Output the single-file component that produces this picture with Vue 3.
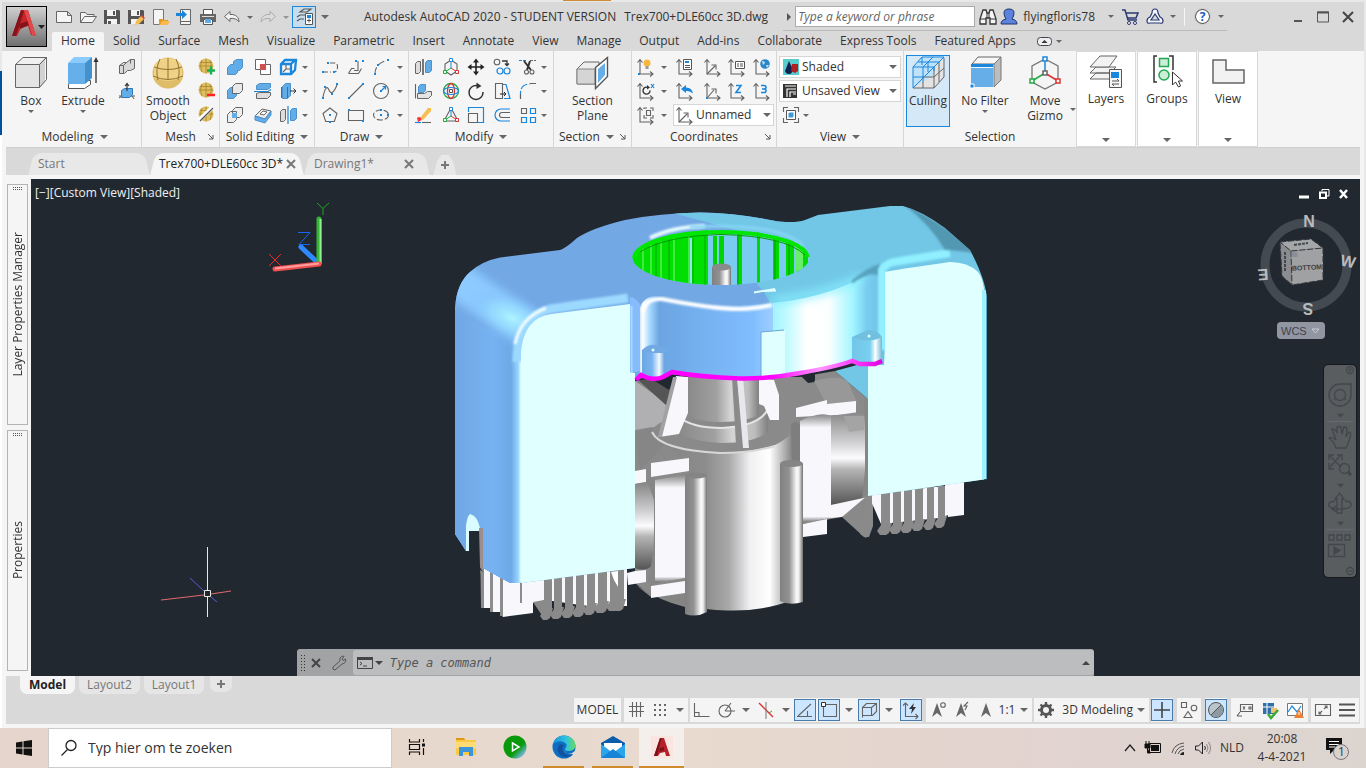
<script setup>
import { ref } from "vue";

const search = ref("");
const command = ref("");
const taskSearch = ref("");

const G = 'fill="none" stroke="#636363" stroke-width="1.1"';
const B = 'fill="none" stroke="#1a86dc" stroke-width="1.2"';
const AXES = `<path d="M4 3v14h13M1.500 5.500 4 2.500l2.500 3M14 14.500l3 2.500-3 2.500" ${G}/>`;
const BALL = `<circle cx="9" cy="9" r="7.500" fill="#e0be62"/><path d="M2 9h14M3 5.500h12M9 1.500v15M5 3q-3 6 0 12M13 3q3 6 0 12" fill="none" stroke="#a5862f" stroke-width=".8"/>`;
const dot = (x, y) => `<path d="M${x - 1} ${y - 1}h2v2h-2z" fill="#1a86dc"/>`;

// small 20x20 glyphs
const icons = {
  // quick access bar
  newFile: `<path d="M2.500 4.500h11l4 4v7h-15zM13.500 4.500v4h4" fill="#f4f4f4" stroke="#666" />`,
  open: `<path d="M2.500 15.500v-10h5l1.500 2h7v2M2.500 15.500l4-6h12l-4 6z" fill="#f4f4f4" stroke="#666"/>`,
  save: `<path d="M2 3h15l1 1v13H2z" fill="#555"/><path d="M5 3h9v6H5zM5 12h10v5H5z" fill="#f3f3f3"/><path d="M11 4h2v4h-2zM6 14h3v3H6z" fill="#555"/>`,
  saveAs: `<path d="M2 3h15l1 1v13H2z" fill="#555"/><path d="M5 3h9v6H5zM5 12h7v5H5z" fill="#f3f3f3"/><path d="M11 4h2v4h-2z" fill="#555"/><path d="m9 18 1-4 5-5 3 3-5 5z" fill="#f6bd4f"/><path d="m15 9 1-1 3 3-1 1z" fill="#e8403a"/>`,
  webOpen: `<path d="M3.500 2.500h10v15h-10z" fill="#f4f4f4" stroke="#777"/><path d="M9 12h4l1 1h4v5H9z" fill="#e39a22"/><path d="m10 18 2-4h8l-2 4z" fill="#f7bb50"/>`,
  webSave: `<path d="M6.500 2.500h10v15h-10z" fill="#f4f4f4" stroke="#666"/><path d="M7 14.500h9" stroke="#666"/><path d="M2 6h6V3l5 4.500L8 12V9H2z" fill="#1a86dc"/>`,
  print: `<path d="M5.500 2.500h9v5h-9z" fill="#fff" stroke="#555"/><path d="M2 7h16v8H2z" fill="#666"/><path d="M4 9h12v1H4z" fill="#ddd"/><path d="M5.500 12.500h9v5h-9z" fill="#fff" stroke="#555"/><path d="M7 12h6v4H7z" fill="#62ace8"/>`,
  undo: `<path d="M2.500 9.500 8 4.500v3c6-.5 9 3 9 7.500-2-3-5-4-9-3.500v3z" fill="#f2f2f2" stroke="#666"/>`,
  redo: `<path d="M17.500 9.500 12 4.500v3c-6-.5-9 3-9 7.500 2-3 5-4 9-3.500v3z" fill="#ddd" stroke="#aaa"/>`,
  sheet: `<path d="m6 5 4-3h7l-4 3zM3 10l3-2h7M3 14l3-2h4" fill="none" stroke="#555" stroke-width="1.200"/><path d="M11.500 6.500h7v11h-7z" fill="#fff" stroke="#555"/><path d="M13 8h4v3h-4z" fill="#1a86dc"/><path d="M13 13.500h4M15 11.500v4" stroke="#555"/>`,
  // modeling
  polysolid: `<path d="m2.500 8.500 4-3 3 0 4-3h4v9l-4 2h-3l-3 3h-5z" fill="#d8d8d8" stroke="#666"/><path d="M2.500 8.500h4l3-3M6.500 8.500v8M13.500 2.500v4" fill="none" stroke="#666"/>`,
  presspull: `<path d="m2 17 3-2M17 18l-2-3M2 15h16" stroke="#555"/><path d="m4.500 9.500 3-2h8v6l-3 3h-8z" fill="#62ace8" stroke="#2d78b8"/><path d="M10 10V3M8 5l2-2.500L12 5" fill="none" stroke="#333" stroke-width="1.200"/>`,
  // mesh
  ballPlus: `${BALL}<path d="M10 13.500h8M14 9.500v8" stroke="#18b050" stroke-width="2.500"/>`,
  ballMinus: `${BALL}<path d="M10 14h8" stroke="#f22" stroke-width="2.500"/>`,
  ballCrease: `${BALL}<path d="M2 15 16 2" stroke="#fff" stroke-width="4"/><path d="M3 16 16 3" stroke="#555" stroke-width="1.300"/>`,
  // solid editing
  union: `<path d="m2.500 10.500 3-3h3v-3l3-2h6v8l-3 3h-2v2l-2 2h-8z" fill="#62ace8" stroke="#4b92cc"/>`,
  subtract: `<path d="m2.500 9.500 3-3h6v8l-3 3h-6z" fill="#62ace8" stroke="#4b92cc"/><path d="m7.500 5.500 3-3h7v7l-3 3h-7z" fill="#e8e8e8" stroke="#666"/>`,
  intersect: `<path d="m2.500 9.500 3-3h6v8l-3 3h-6zM7.500 5.500l3-3h7v7l-3 3h-7z" fill="#eee" stroke="#666"/><path d="M7 8h5v5H7z" fill="#62ace8"/>`,
  interfere: `<path d="M2.500 2.500h10v10h-10zM7.500 7.500h10v10h-10z" fill="#fff" stroke="#666"/><path d="M7 7h6v6H7z" fill="#d05050"/>`,
  slice: `<path d="m3.500 4.500 3-2h11v4l-3 2h-11z" fill="#62ace8" stroke="#4b92cc"/><path d="m3.500 12.500 3-1h11v3l-3 3h-11z" fill="#ddd" stroke="#666"/><path d="m1 10.500 14 0 3-2" ${B}/>`,
  thicken: `<path d="m2 11 7-7 9 2-6 8z" fill="#eee" stroke="#666"/><path d="m2 11 10 3 6-8v4l-6 8-10-3z" fill="#62ace8" stroke="#4b92cc"/><path d="m7 9 3-3 4 1-3 3z" fill="#fff" stroke="#666"/>`,
  edges: `<path d="m3 7 4-4h11l-1 10-4 4H3zM3 7h10v10M13 7l4-4" fill="none" stroke="#1a86dc" stroke-width="2.300"/><path d="M8 8v4l-3 3M8 12h4" ${G}/>`,
  taper: `<path d="m4.500 5.500 3-3h5v12l-3 3h-5z" fill="#62ace8" stroke="#4b92cc"/><path d="M3.500 6v11M9.500 6v11" stroke="#666"/><path d="M12 10h6M15.500 7.500 18 10l-2.500 2.500" fill="none" stroke="#333"/>`,
  separate: `<path d="m2.500 6.500 2-2h3v10l-2 2h-3z" fill="#ddd" stroke="#666"/><path d="m12.500 5.500 2-2h4v10l-2 2h-4z" fill="#62ace8" stroke="#4b92cc"/><path d="M10 1v18" ${B}/>`,
  // draw
  pline: `<path d="M3 15h8M10 6h4q4 0 3.500 4.500T14 15" ${G} stroke-dasharray="5 2"/>${dot(3, 15)}${dot(8, 6)}${dot(14, 15)}`,
  planar: `<path d="m2.500 16.500 3-5h3M2.500 16.500h10l3-5M8 13.500h4V4" ${G}/>${dot(10, 4)}${dot(17, 4)}`,
  arc: `<path d="M4 17q0-11 13-14" ${G} stroke-dasharray="7 3"/>${dot(4, 17)}${dot(7, 8)}${dot(17, 3)}`,
  spline: `<path d="M3 16q3-14 6-7t8-5" ${G}/>${dot(3, 17)}${dot(5, 6)}${dot(12, 13)}${dot(17, 3)}`,
  line: `<path d="M3 17 17 3" ${G}/>${dot(3, 17)}${dot(17, 3)}`,
  circle: `<circle cx="10" cy="10" r="7.500" ${G}/>${dot(10, 10)}<path d="m10 10 4-4M11.500 5.500h3v3" ${B}/>`,
  polygon: `<path d="m10 3 7 5.500-2.700 8H5.700L3 8.500z" ${G}/>${dot(10, 10)}${dot(10, 17)}`,
  rect: `<path d="M2.500 5.500h15v10h-15z" ${G}/>${dot(3, 5)}${dot(17, 16)}`,
  ellipse: `<ellipse cx="10" cy="10" rx="7.500" ry="5" ${G} stroke-dasharray="6 2"/>${dot(10, 10)}${dot(17, 10)}${dot(10, 5)}`,
  // modify
  mirror3d: `<path d="m2.500 6.500 2-2h3v10l-2 2h-3z" fill="#ddd" stroke="#666"/><path d="m12.500 5.500 2-2h4v10l-2 2h-4z" fill="#62ace8" stroke="#4b92cc"/><path d="M10 2v16" stroke="#333" stroke-width="1.300"/>`,
  gizmoMove: `<path d="m10 3 6 4v7l-6 4-6-4V7z" ${G}/><path d="M10 3v8" stroke="#1a86dc"/><path d="m10 11-6 4" stroke="#2a4"/><path d="m10 11 6 4" stroke="#d33"/><path d="M8.500 1.500h3v3h-3z" fill="#fff" stroke="#1a86dc"/><path d="M2.500 13.500h3v3h-3z" fill="#fff" stroke="#2a4"/><path d="M14.500 13.500h3v3h-3z" fill="#fff" stroke="#d33"/>`,
  move: `<path d="M10 3v14M3 10h14" stroke="#222" stroke-width="1.600"/><path d="m7 5.500 3-4 3 4zM7 14.500l3 4 3-4zM5.500 7l-4 3 4 3zM14.500 7l4 3-4 3z" fill="#222"/>`,
  copy: `<circle cx="5" cy="5" r="2.800" ${G}/><path d="M10 4h5v4M13 6.500l2 2 2-2" fill="none" stroke="#333" stroke-width="1.300"/><circle cx="8" cy="14" r="3" ${B}/><circle cx="15" cy="14" r="3" ${B}/>`,
  trim: `<path d="M1 3.500h7" ${B} stroke-dasharray="3 1"/><path d="M12 3.500h6" ${G} stroke-dasharray="3 1"/><path d="m6 4 7 9M12 4 9 13" stroke="#333" stroke-width="2"/><circle cx="8.500" cy="15" r="2" ${G}/><circle cx="14" cy="15" r="2" ${G}/>`,
  align3d: `<path d="M2.500 3v14.500" ${G}/><path d="M4.500 12.500h7l3-2h4v4l-3 3h-11z" fill="#e4e4e4" stroke="#666"/><path d="m5.500 5.500 2-2h5v6l-2 2h-5z" fill="#62ace8" stroke="#4b92cc"/>`,
  gizmoRotate: `<circle cx="10" cy="10" r="7.500" fill="none" stroke="#2a4" stroke-width="1.300"/><ellipse cx="10" cy="10" rx="3.500" ry="7.500" fill="none" stroke="#d33" stroke-width="1.300"/><ellipse cx="10" cy="10" rx="7.500" ry="3.500" ${B}/><path d="M8.500 8.500h3v3h-3z" fill="#fff" stroke="#555"/>`,
  rotate: `<path d="M11 4.500A7 7 0 1 0 17 11" fill="none" stroke="#333" stroke-width="1.500"/><path d="m10.500 1.500 5 3.500-5 3z" fill="#333"/>`,
  stretch: `<path d="M3.500 2.500h7v15h-7z" ${G}/><path d="M11 3.500h3l4 14h-6" ${B}/><path d="M8 13h6M12 11l2 2-2 2" fill="none" stroke="#222"/>`,
  fillet: `<path d="M2.500 18V12Q3 3 12 3" ${B} stroke-dasharray="8 2"/><path d="M12 2.500h6M2.500 13v5" ${G}/>`,
  erase: `<path d="m7 13 8-10 3 0v3l-8 9z" fill="#f6bd4f"/><path d="M4 13q2-2 4 0t-3 4z" fill="#f33"/><path d="M2 17.500h6" ${B}/><path d="M9 17.500h9" ${G}/>`,
  gizmoScale: `<path d="M10 3 3 16h14z" ${G}/><path d="M10 3v8" stroke="#1a86dc"/><path d="m10 11-6 4" stroke="#2a4"/><path d="m10 11 6 4" stroke="#d33"/><path d="M8.500 2.500h3v3h-3z" fill="#fff" stroke="#1a86dc"/><path d="M2.500 13.500h3v3h-3z" fill="#fff" stroke="#2a4"/><path d="M14.500 13.500h3v3h-3z" fill="#fff" stroke="#d33"/>`,
  scale: `<path d="M2.500 7V2.500h15v15H12" ${B}/><path d="M2.500 8.500h9v9h-9z" ${G}/>`,
  offset: `<path d="M18 4H9a6 6 0 0 0 0 12h9" ${B}/><path d="M18 7.500h-8a2.500 2.500 0 0 0 0 5h8" ${G}/>`,
  array: `<path d="M3.500 3.500h5v5h-5z" ${G}/><path d="M12.500 3.500h5v5h-5zM3.500 12.500h5v5h-5zM12.500 12.500h5v5h-5z" ${B}/>`,
  // coordinates
  ucsIcon: `${AXES}<circle cx="11" cy="6" r="3.500" fill="#f6b73c"/><path d="M9.500 9h3v3h-3z" fill="#999"/>${dot(3, 17)}`,
  ucsX: `${AXES}<path d="M12 6.500a3.500 3.500 0 1 0 2 3" fill="none" stroke="#333" stroke-width="1.400"/><path d="m11 4 3 2.500-3 2z" fill="#333"/><path d="m15 3 3 4m0-4-3 4" ${B}/>`,
  ucsView: `${AXES}<path d="M8 4V3h3M14 3h3v3M8 10v3h3M17 10v3h-3M10.500 5.500h4v5h-4z" ${G}/>`,
  ucsNamed: `${AXES}<path d="M8.500 2.500h8v10h-8z" fill="#fff" stroke="#555"/><path d="M10 4h4v2h-4z" fill="#1a86dc"/><path d="M10 8.500h5M10 10.500h5" stroke="#555"/>`,
  ucsFree: `${AXES}<path d="m4 17 8-8M8.500 8H13v4.500" ${G}/>`,
  ucsManage: `${AXES}<path d="M8.500 4.500h9v7h-9z" fill="#fff" stroke="#555"/><path d="M10 7h2M10 9h2M13 7h3M13 9h3" stroke="#555"/>`,
  ucsWorld: `${AXES}<circle cx="13" cy="7" r="4.800" fill="#2b87c8"/><path d="M10 4q3 0 3 2l-2 2zM14 8l3 0-2 3z" fill="#bde0f5"/>`,
  ucsPrev: `${AXES}<path d="m6 8 5-4v2.500q6 0 7 6-3-3-7-2.500V12z" fill="#1a86dc"/>`,
  ucsOrigin: `${AXES}<path d="m4 17 7-8M8.500 8H13v4.500" ${G}/>${dot(4, 17)}`,
  ucsZ: `${AXES}<path d="M9 4.500h5l-5 7h5" fill="none" stroke="#1a86dc" stroke-width="1.600"/>`,
  ucs3: `${AXES}<path d="M9 4.500h3q2 0 2 1.700T12 8h-2 2q2 0 2 1.800t-2 1.700H9" fill="none" stroke="#1a86dc" stroke-width="1.600"/>`,
  // view panel
  shaded: `<path d="M2 2h16v16H2z" fill="#58cccc"/><path d="m8 4 4 9q-1 4-4 4t-4-3z" fill="#112050"/><path d="M11 7h6v7l-3 2-4-2z" fill="#b02020"/>`,
  unsaved: `<path d="M2 3h14v14H2z" fill="#333"/><path d="M4 5h11M6 16V8h9M9 16v-5h6M12 13h3" fill="none" stroke="#fff" stroke-width="1.200"/>`,
  viewports: `<path d="M2.500 7V2.500H7M13 2.500h4.500V7M17.500 13v4.500H13M7 17.500H2.500V13" ${G}/><path d="M5.500 5.500h9v9h-9z" fill="#fff" stroke="#555"/><path d="m7.500 8.500 1-1h4v4l-1 1h-4z" fill="#3f99d8"/>`,
  // status bar
  grid: `<path d="M3 6.500h15M3 11.500h15M6.500 2v15M10.500 2v15M14.500 2v15" ${G}/>`,
  snap: `<path d="M4 5h13M4 10h13M4 15h13" stroke="#666" stroke-width="2" stroke-dasharray="2 3"/>`,
  ortho: `<path d="M2.500 3v13.500h15M3 12.500h4v4" ${G}/>`,
  polar: `<circle cx="9" cy="11" r="6" ${G}/><path d="m9 11 6-8M9 11h10" ${G}/>`,
  iso: `<path d="M3 3l14 14" stroke="#d33" stroke-width="1.400"/><path d="M10 2v17" stroke="#777"/><path d="m13 13 3-2" stroke="#2a4"/>`,
  otrack: `<path d="M2 16.500h15M3 16 16 4M12.500 11v5" ${G}/>`,
  osnap: `<path d="M6 4.500h11.500v12H4.500V7" ${G}/><path d="M2.500 2.500h4v4h-4z" fill="#fff" stroke="#333"/>`,
  osnap3d: `<path d="m3.500 7.500 4-4h10v8l-4 4h-10zM3.500 7.500h9M12.500 7.500v8M12.500 7.500l5-4M3.500 15.500v2" ${G}/>`,
  dynUcs: `<path d="M4.500 3v13.500H17M2 5.500 4.500 3 7 5.500M14.500 14l2.500 2.500-2.500 2.500" ${G}/><path d="m13 3-5 6h3l-1 5 5-7h-3z" fill="#333"/>`,
  anno1: `<path d="m9 3 5 14-5-4-5 4z" fill="#666"/><circle cx="15" cy="5" r="2.300" ${G}/>`,
  anno2: `<path d="m9 3 5 14-5-4-5 4z" fill="#666"/><path d="m16 2-4 4h3l-2 4" ${G}/>`,
  anno3: `<path d="m10 3 5 14-5-4-5 4z" fill="#666"/>`,
  gear: `<circle cx="10" cy="10" r="4.500" fill="none" stroke="#555" stroke-width="3"/><path d="M10 2v3M10 15v3M2 10h3M15 10h3M4.500 4.500l2 2M13.500 13.500l2 2M4.500 15.500l2-2M13.500 6.500l2-2" stroke="#555" stroke-width="2.400"/>`,
  plus: `<path d="M10 2v16M2 10h16" stroke="#444" stroke-width="1.600"/>`,
  shapes: `<path d="M2.500 2.500h5v5h-5zM9 11.500l-4 6h8z" ${G} /><circle cx="15" cy="8" r="2.800" ${G}/>`,
  isolate: `<circle cx="10" cy="10" r="7.500" fill="#b9c4cc" stroke="#555"/><path d="M5 15 15 5a7 7 0 0 1-10 10z" fill="#8e9aa3"/><path d="m5 15 10-10" stroke="#555"/>`,
  units: `<path d="M5.500 4.500h12v7h-12zM5 12l-3 4M2 16h5" ${G}/><path d="m8 6.500 2 3m0-3-2 3M14 7h2v2h-2z" ${G}/>`,
  hardware: `<path d="M3 3h11v11H3z" fill="#2f6fa8"/><path d="M7 3v11M3 7h11" stroke="#fff"/><path d="M11 8h6v5h-6z" fill="#f2c46a"/><path d="m8 14 3 4 7-8" fill="none" stroke="#3aaa35" stroke-width="2.500"/>`,
  monitor: `<path d="M2.500 3.500h15v12h-15z" fill="#fff" stroke="#777"/><path d="m3 12 4-6 5 6 4-6" ${B}/><path d="m14 9 5 9H9z" fill="#f08030"/><path d="M14 12v3" stroke="#fff"/>`,
  clean: `<path d="M2.500 4.500h15v11h-15z" ${G}/><path d="m11 9 3-3M11.500 6H14v2.500M9 11l-3 3M8.500 14H6v-2.500" ${G}/>`,
  menu: `<path d="M2 4.500h16M2 10h16M2 15.500h16" stroke="#555" stroke-width="1.800"/>`,
};

// large 36x36 glyphs
const bigIcons = {
  box: `<path d="M3 9 10 2h22v25l-6 6H3z" fill="#f0f0f0"/><path d="M26 9l6-7v25l-6 6z" fill="#d2d2d2"/><path d="M3 9h23v24H3z" fill="#e4e4e4"/><path d="M2.500 9.500 10 2.500h23.500v22l-7 8h-24zM26.500 9.500l7-7M2.500 9.500h24v23" fill="none" stroke="#666"/>`,
  extrude: `<path d="m3.500 29.500 5-4h17v4l-6 4h-16z" fill="#fff" stroke="#555"/><path d="M3 8h17v21H3z" fill="#65b0ea"/><path d="m3 8 6-6h18l-7 6z" fill="#8accff"/><path d="m20 8 7-6v21l-7 6z" fill="#4291cd"/><path d="M31 28V5" stroke="#333" stroke-width="1.300"/><path d="M28.500 7 31 2l2.500 5z" fill="#333"/>`,
  sphere: `<circle cx="18" cy="18" r="15.500" fill="#dfbd68"/><path d="M4 10q14-14 28 0v13Q18 29 4 23z" fill="#f0d287"/><path d="M3 21q15 7 30 0M4 12q14 5 28 0M18 3v21M10 4Q5 14 8 25M26 4q5 10 2 21" fill="none" stroke="#8f732e"/>`,
  section: `<path d="m2 14 7-7h15v17l-4 5H2z" fill="#eee" stroke="#666"/><path d="M2 14h18v15H2z" fill="#d5d5d5" stroke="#888"/><path d="m20.500 12.500 12-10v19l-12 12z" fill="#fff" stroke="#555" stroke-width="1.400"/><path d="m23 14 7-6v12l-7 8z" fill="#65aee8"/>`,
  culling: `<path d="M3 12 12 2h22v20L24 33H3z" fill="#e3e3e3"/><path d="M3 12 12 2h22l-11 10v9L3 33z" fill="#bfe2fb"/><path d="M24 12v21H3M34 3v19L24 33M13 22v11M13 22h11l10-9M29 7v20" fill="none" stroke="#666"/><path d="M3 33V12L12 2h22L24 12H3M13 12v11M3 22h11M13 12l10-10M8 7h21M24 12v4M3 33l21-21M18 7v10M12 2v8" fill="none" stroke="#1a86dc"/>`,
  nofilter: `<path d="m5 9 6-7h23L27 9z" fill="#f6f6f6" stroke="#666"/><path d="m27 9 7-7v23l-7 7z" fill="#bdbdbd" stroke="#777"/><path d="M4 9h22v3H4z" fill="#1a86dc"/><path d="M4 13h22v19H4z" fill="#65aee8"/><path d="M3 29h4v4H3z" fill="#1a86dc" stroke="#fff"/>`,
  gizmo: `<path d="m18 4 13 7v16l-13 7-13-7V11z" fill="none" stroke="#777" stroke-width="1.300"/><path d="M18 4v14" stroke="#1a86dc" stroke-width="1.500"/><path d="M18 18 5 26" stroke="#2a4" stroke-width="1.500"/><path d="m18 18 13 8" stroke="#d33" stroke-width="1.500"/><g fill="#fff" stroke-width="1.500"><path d="M16 2h4v4h-4z" stroke="#1a86dc"/><path d="M3 24h4v4H3z" stroke="#2a4"/><path d="M29 24h4v4h-4z" stroke="#d33"/><path d="M16 16h4v4h-4z" stroke="#666"/></g>`,
  layers: `<g fill="#f3f3f3" stroke="#666"><path d="m2 25 6-6h20l-6 6zM2 19l6-6h20l-6 6z"/><path d="M2 13 12 2h17l-8 11z"/></g><path d="M21.500 15.500h12v18h-12z" fill="#f6f6f6" stroke="#555"/><path d="M23 18h8v6h-8z" fill="#1a86dc"/><path d="M24 27h7M24 30h7M29 25l2 2M26 32l-2-2" stroke="#555"/>`,
  groups: `<path d="M8 2H5v26h3M20 2h4v14" fill="none" stroke="#333" stroke-width="1.500"/><path d="M10.500 4.500h9v8h-9z" fill="#cdeed6" stroke="#22a850" stroke-width="1.500"/><circle cx="15" cy="21" r="5" fill="#cdeed6" stroke="#22a850" stroke-width="1.500"/><path d="M23.500 18v13l3-3 3 5 2-1-2-5h4z" fill="#fff" stroke="#333"/>`,
  view: `<path d="M3 6h13v10h18v13H3z" fill="#f2f2f2" stroke="#666" stroke-width="1.500"/>`,
};

const quick = ["newFile", "open", "save", "saveAs", "webOpen", "webSave", "print", "undo"];
const tabs = ["Home", "Solid", "Surface", "Mesh", "Visualize", "Parametric", "Insert", "Annotate", "View", "Manage", "Output", "Add-ins", "Collaborate", "Express Tools", "Featured Apps"];

const solidGrid = ["union", "interfere", "edges", "v", "subtract", "slice", "taper", "v", "intersect", "thicken", "separate", "v"];
const drawGrid = ["pline", "planar", "arc", "v", "spline", "line", "circle", "v", "polygon", "rect", "ellipse", "v"];
const modifyGrid = [
  "mirror3d", "gizmoMove", "move", "copy", "trim", "v",
  "align3d", "gizmoRotate", "rotate", "stretch", "fillet", "v",
  "erase", "gizmoScale", "scale", "offset", "array", "v",
];
const coordGrid = [
  "ucsIcon", "v", "ucsNamed", "ucsFree", "ucsManage", "ucsWorld",
  "ucsX", "v", "ucsPrev", "ucsOrigin", "ucsZ", "ucs3",
  "ucsView", "v",
];
const sidePanels = [
  { name: "Layers", icon: "layers" },
  { name: "Groups", icon: "groups" },
  { name: "View", icon: "view" },
];

// cooling fins: [left, right, bottom]
const finsLeft = [[544, 551, 620], [554, 562, 619], [565, 573, 618], [576, 584, 617], [587, 595, 615], [598, 607, 613], [610, 624, 611]];
const finsRight = [[881, 890, 535], [893, 901, 534], [904, 912, 533], [915, 923, 531], [927, 934, 530], [938, 945, 528]];
const fin = ([l, r, b], top) =>
  `M${l} ${top}H${r}V${b - 12}L${r + 2} ${b - 12}L${r - 1} ${b - 2}L${r - 4} ${b}H${l - 1}L${l - 4} ${b - 4}L${l} ${b - 10}Z`;
const ribs = [[737, 742], [757, 760], [773, 779], [786, 794], [796, 800], [802, 808]];
</script>

<template>
  <div class="desktop">
    <div class="window">
      <header class="head">
        <button class="app-btn" aria-label="Application menu">
          <svg width="41" height="40" viewBox="0 0 41 40">
            <path d="M5 29 14 3h7l8 26-5-1-3-9-7 2-4 8z" fill="#c8252b" />
            <path d="m14 3 3 1-8 25-4 0zM12 17l9-3 1 4-9 4z" fill="#85141a" />
            <path d="m17 3 4 0 8 26-4-1z" fill="#e04a4a" />
            <path d="M31 18h7l-3.500 4z" fill="#222" />
          </svg>
        </button>
        <div class="head-rows">
          <div class="title-row">
            <div class="quick">
              <button v-for="q in quick" :key="q" class="ico" :aria-label="q"><svg viewBox="0 0 20 20" v-html="icons[q]"></svg></button>
              <i class="caret"></i>
              <button class="ico" aria-label="Redo"><svg viewBox="0 0 20 20" v-html="icons.redo"></svg></button>
              <i class="caret faint"></i>
              <button class="ico sheet on" aria-label="Sheet set"><svg viewBox="0 0 20 20" v-html="icons.sheet"></svg></button>
              <i class="caret wide"></i>
            </div>
            <div class="doc-title">
              <span>Autodesk AutoCAD 2020 - STUDENT VERSION</span>
              <span>Trex700+DLE60cc 3D.dwg</span>
            </div>
            <div class="info">
              <i class="caret right"></i>
              <input v-model="search" class="keyword" type="text" placeholder="Type a keyword or phrase" aria-label="Search" />
              <button class="ico" aria-label="Find">
                <svg viewBox="0 0 20 20"><path d="M5 3h3l1 3h2l1-3h3l3 9v5h-6v-6H8v6H2v-5z" fill="#f5f5f5" stroke="#333" stroke-width="1.300" /><path d="M2 12h6M12 12h6M9 6v5M11 6v5" stroke="#333" /></svg>
              </button>
              <a href="#" class="user">
                <svg width="18" height="18" viewBox="0 0 18 18"><path d="M1 16q0-4 5-5-2-3-2-6 0-4 5-4t5 4q0 3-2 6 5 1 5 5z" fill="#5b82dc" stroke="#223468" /></svg>
                flyingfloris78
              </a>
              <i class="caret user-caret"></i>
              <button class="ico" aria-label="Store">
                <svg viewBox="0 0 20 20"><path d="M2 3h3l3 10h9M6 6h12l-2 5H7.500" fill="none" stroke="#2b3870" stroke-width="1.500" /><circle cx="9" cy="16" r="1.500" fill="#fff" stroke="#2b3870" /><circle cx="15" cy="16" r="1.500" fill="#fff" stroke="#2b3870" /></svg>
              </button>
              <button class="ico" aria-label="Autodesk">
                <svg viewBox="0 0 20 20"><path d="M10 2q3 0 3 4l2 4q3 1 3 4 0 3-3 2H5q-3 1-3-2 0-3 3-4l2-4q0-4 3-4zM10 7l-4 6h8z" fill="#f1f3fa" stroke="#2b3870" stroke-width="1.200" /></svg>
              </button>
              <i class="caret"></i>
              <span class="bar"></span>
              <button class="ico help" aria-label="Help"><span>?</span></button>
              <i class="caret"></i>
            </div>
            <div class="win-btns">
              <button aria-label="Minimize"><svg width="14" height="14" viewBox="0 0 14 14"><path d="M3 11h8" stroke="#555" stroke-width="2" /></svg></button>
              <button aria-label="Maximize"><svg width="14" height="14" viewBox="0 0 14 14"><path d="M1.500 2h11v10h-11z" fill="none" stroke="#555" /><path d="M1 2.500h12" stroke="#555" stroke-width="2" /></svg></button>
              <button aria-label="Close"><svg width="14" height="14" viewBox="0 0 14 14"><path d="m2 2 10 10M12 2 2 12" stroke="#444" stroke-width="2" /></svg></button>
            </div>
          </div>
          <nav class="tabs">
            <a v-for="(t, i) in tabs" :key="t" href="#" :class="{ active: i === 0 }">{{ t }}</a>
            <button class="min-ribbon" aria-label="Minimize ribbon">
              <svg width="15" height="10" viewBox="0 0 15 10"><rect x=".5" y=".5" width="14" height="8" rx="3" fill="#eee" stroke="#445" /><path d="M4.500 6 7.500 3l3 3z" fill="#333" /></svg>
            </button>
            <i class="caret"></i>
          </nav>
        </div>
      </header>

      <section class="ribbon">
        <div class="panel modeling">
          <div class="body">
            <button class="big"><svg viewBox="0 0 36 36" v-html="bigIcons.box"></svg><span>Box</span><i class="caret"></i></button>
            <button class="big ext"><svg viewBox="0 0 36 36" v-html="bigIcons.extrude"></svg><span>Extrude</span><i class="caret"></i></button>
            <div class="stack">
              <button class="ico" aria-label="Polysolid"><svg viewBox="0 0 20 20" v-html="icons.polysolid"></svg></button>
              <button class="ico" aria-label="Presspull"><svg viewBox="0 0 20 20" v-html="icons.presspull"></svg></button>
            </div>
          </div>
          <footer>Modeling <i class="caret wide"></i></footer>
        </div>
        <div class="panel mesh">
          <div class="body">
            <button class="big"><svg viewBox="0 0 36 36" v-html="bigIcons.sphere"></svg><span>Smooth<br />Object</span></button>
            <div class="stack">
              <button v-for="b in ['ballPlus', 'ballMinus', 'ballCrease']" :key="b" class="ico" :aria-label="b"><svg viewBox="0 0 20 20" v-html="icons[b]"></svg></button>
            </div>
          </div>
          <footer>Mesh <svg class="launch" width="6" height="6" viewBox="0 0 6 6"><path d="m0 0 5 5M5 1v4H1" fill="none" stroke="#555" /></svg></footer>
        </div>
        <div class="panel solid">
          <div class="body cells">
            <template v-for="(n, i) in solidGrid" :key="i">
              <i v-if="n === 'v'" class="caret"></i>
              <button v-else class="ico" :aria-label="n"><svg viewBox="0 0 20 20" v-html="icons[n]"></svg></button>
            </template>
          </div>
          <footer>Solid Editing <i class="caret wide"></i></footer>
        </div>
        <div class="panel draw">
          <div class="body cells">
            <template v-for="(n, i) in drawGrid" :key="i">
              <i v-if="n === 'v'" class="caret"></i>
              <button v-else class="ico" :aria-label="n"><svg viewBox="0 0 20 20" v-html="icons[n]"></svg></button>
            </template>
          </div>
          <footer>Draw <i class="caret wide"></i></footer>
        </div>
        <div class="panel modify">
          <div class="body cells">
            <template v-for="(n, i) in modifyGrid" :key="i">
              <i v-if="n === 'v'" class="caret"></i>
              <button v-else class="ico" :aria-label="n"><svg viewBox="0 0 20 20" v-html="icons[n]"></svg></button>
            </template>
          </div>
          <footer>Modify <i class="caret wide"></i></footer>
        </div>
        <div class="panel sect">
          <div class="body">
            <button class="big"><svg viewBox="0 0 36 36" v-html="bigIcons.section"></svg><span>Section<br />Plane</span></button>
          </div>
          <footer>Section <i class="caret wide"></i><svg class="launch" width="6" height="6" viewBox="0 0 6 6"><path d="m0 0 5 5M5 1v4H1" fill="none" stroke="#555" /></svg></footer>
        </div>
        <div class="panel coords">
          <div class="body cells">
            <template v-for="(n, i) in coordGrid" :key="i">
              <i v-if="n === 'v'" class="caret"></i>
              <button v-else class="ico" :aria-label="n"><svg viewBox="0 0 20 20" v-html="icons[n]"></svg></button>
            </template>
            <label class="combo ucs">
              <svg viewBox="0 0 20 20" v-html="icons.ucsFree"></svg>
              <select aria-label="Named UCS"><option>Unnamed</option></select>
              <i class="caret wide"></i>
            </label>
          </div>
          <footer>Coordinates <svg class="launch" width="6" height="6" viewBox="0 0 6 6"><path d="m0 0 5 5M5 1v4H1" fill="none" stroke="#555" /></svg></footer>
        </div>
        <div class="panel viewp">
          <div class="body view-body">
            <label class="combo">
              <svg viewBox="0 0 20 20" v-html="icons.shaded"></svg>
              <select aria-label="Visual style"><option>Shaded</option></select>
              <i class="caret wide"></i>
            </label>
            <label class="combo">
              <svg viewBox="0 0 20 20" v-html="icons.unsaved"></svg>
              <select aria-label="Named view"><option>Unsaved View</option></select>
              <i class="caret wide"></i>
            </label>
            <div class="vp-row">
              <button class="ico" aria-label="Viewports"><svg viewBox="0 0 20 20" v-html="icons.viewports"></svg></button>
              <i class="caret"></i>
            </div>
          </div>
          <footer>View <i class="caret wide"></i></footer>
        </div>
        <div class="panel selection">
          <div class="body">
            <button class="big on"><svg viewBox="0 0 36 36" v-html="bigIcons.culling"></svg><span>Culling</span></button>
            <button class="big nofilter"><svg viewBox="0 0 36 36" v-html="bigIcons.nofilter"></svg><span>No Filter</span><i class="caret"></i></button>
            <button class="big"><svg viewBox="0 0 36 36" v-html="bigIcons.gizmo"></svg><span>Move<br />Gizmo</span></button>
            <i class="caret gizmo-caret"></i>
          </div>
          <footer>Selection</footer>
        </div>
        <button v-for="p in sidePanels" :key="p.name" class="side-panel">
          <svg viewBox="0 0 36 36" v-html="bigIcons[p.icon]"></svg>
          <span>{{ p.name }}</span>
          <i class="caret wide"></i>
        </button>
      </section>

      <div class="files">
        <div class="file start"><span>Start</span></div>
        <div class="file current"><span>Trex700+DLE60cc 3D*</span><button aria-label="Close drawing"><svg width="10" height="10" viewBox="0 0 10 10"><path d="m1 1 8 8M9 1 1 9" stroke="#777" stroke-width="2" /></svg></button></div>
        <div class="file other"><span>Drawing1*</span><button aria-label="Close drawing"><svg width="10" height="10" viewBox="0 0 10 10"><path d="m1 1 8 8M9 1 1 9" stroke="#777" stroke-width="2" /></svg></button></div>
        <button class="file add" aria-label="New drawing"><svg width="10" height="10" viewBox="0 0 10 10"><path d="M5 1v8M1 5h8" stroke="#777" stroke-width="2" /></svg></button>
      </div>

      <main class="work">
        <aside class="palettes">
          <div class="palette"><i class="grip"></i><span>Layer Properties Manager</span></div>
          <div class="palette"><i class="grip"></i><span>Properties</span></div>
        </aside>

        <div class="canvas">
          <svg class="scene" viewBox="31 179 1329 497">
            <defs>
              <linearGradient id="side"><stop offset="0" stop-color="#6ea5e1" /><stop offset=".25" stop-color="#73abe9" /><stop offset=".6" stop-color="#76b2f2" /><stop offset=".86" stop-color="#6ea9e6" /><stop offset=".96" stop-color="#98d4ff" /><stop offset="1" stop-color="#e0ffff" /></linearGradient>
              <linearGradient id="wallL"><stop offset="0" stop-color="#90c3ff" /><stop offset=".05" stop-color="#fff" /><stop offset=".1" stop-color="#a7d9ff" /><stop offset=".17" stop-color="#6ba5e2" /><stop offset=".5" stop-color="#76b1f1" /><stop offset=".85" stop-color="#80bdff" /><stop offset="1" stop-color="#9ccfff" /></linearGradient>
              <linearGradient id="wallR"><stop offset="0" stop-color="#a2f4ff" /><stop offset=".14" stop-color="#c5fbff" /><stop offset=".3" stop-color="#fff" /><stop offset=".5" stop-color="#fdffff" /><stop offset=".72" stop-color="#a2f6ff" /><stop offset=".84" stop-color="#78cff2" /><stop offset="1" stop-color="#6fbfe0" /></linearGradient>
              <linearGradient id="body"><stop offset="0" stop-color="#848484" /><stop offset=".38" stop-color="#8c8c8c" /><stop offset=".55" stop-color="#a9a9a9" /><stop offset=".7" stop-color="#f0f0f2" /><stop offset=".84" stop-color="#fff" /><stop offset=".92" stop-color="#c4c4c4" /><stop offset="1" stop-color="#858585" /></linearGradient>
              <linearGradient id="post"><stop offset="0" stop-color="#808080" /><stop offset=".4" stop-color="#929292" /><stop offset=".72" stop-color="#fafafa" /><stop offset=".82" stop-color="#eee" /><stop offset="1" stop-color="#707070" /></linearGradient>
              <linearGradient id="tube" x2="0" y2="1"><stop offset="0" stop-color="#858585" /><stop offset=".3" stop-color="#c8c8ca" /><stop offset=".5" stop-color="#fcfcff" /><stop offset=".62" stop-color="#b5b5b5" /><stop offset="1" stop-color="#555" /></linearGradient>
              <linearGradient id="plate" x2="0" y2="1"><stop offset="0" stop-color="#888" /><stop offset=".12" stop-color="#f8f8fc" /><stop offset=".94" stop-color="#f8f8fc" /><stop offset="1" stop-color="#666" /></linearGradient>
              <linearGradient id="shaft"><stop offset="0" stop-color="#8a8a8a" /><stop offset=".4" stop-color="#a0a0a0" /><stop offset=".6" stop-color="#d4d4d4" /><stop offset=".85" stop-color="#bcbcbc" /><stop offset="1" stop-color="#808080" /></linearGradient>
              <linearGradient id="lug"><stop offset="0" stop-color="#6ca6e2" /><stop offset=".45" stop-color="#78b2f0" /><stop offset=".78" stop-color="#f2faff" /><stop offset="1" stop-color="#72a9e2" /></linearGradient>
              <linearGradient id="lug2"><stop offset="0" stop-color="#72c6e8" /><stop offset=".6" stop-color="#78cfef" /><stop offset=".78" stop-color="#fff" /><stop offset="1" stop-color="#70b8d6" /></linearGradient>
              <linearGradient id="seal"><stop offset="0" stop-color="#f0f" /><stop offset=".55" stop-color="#f0f" /><stop offset=".75" stop-color="#ff96ff" /><stop offset=".88" stop-color="#ff40ff" /><stop offset="1" stop-color="#e000e0" /></linearGradient>
              <radialGradient id="corner"><stop offset="0" stop-color="#aef4ff" /><stop offset=".5" stop-color="#96dcff" stop-opacity=".7" /><stop offset="1" stop-color="#78b4f4" stop-opacity="0" /></radialGradient>
              <filter id="soft" x="-30%" y="-30%" width="160%" height="160%"><feGaussianBlur stdDeviation="5" /></filter>
              <filter id="fine" x="-20%" y="-20%" width="140%" height="140%"><feGaussianBlur stdDeviation="1" /></filter>
              <clipPath id="cowl"><path d="M455 307Q457 283 470 272 482 261 500 257.500L560 250Q566 248 577 238 592 228 625 220 660 213 700 212.500 735 213 770 220 793 224 805 220L818 215 890 206H903Q922 211 945 228L970 250Q986 280 987 300V479L868 496V365L852 362Q800 378 740 380 700 378 672 374L635 379V568L522 583H510L483 568 480 530Q475 514 471 514 467 516 466 551L455 534Z" /></clipPath>
              <clipPath id="hole"><ellipse cx="721" cy="257.500" rx="88.500" ry="27.500" /></clipPath>
            </defs>

            <!-- engine -->
            <path d="M635 381 690 377H800L835 371 868 399V500L842 517 803 524 760 600 650 595 635 583Z" fill="#8a8a8a" />
            <path d="M635 381 668 404 660 436 635 430Z" fill="#b0b0b2" />
            <path d="M638 380 674 377 667 406Z" fill="#555" />
            <path d="M650 378 675 377 669 390Z" fill="#222830" />
            <path d="M801 376 815 373V382L808 383Z" fill="#222830" />
            <path d="M814 381Q840 374 848 382L857 402 827 405Z" fill="#989898" />
            <!-- left exhaust -->
            <path d="M635 430 652 427V475H635Z" fill="#8a8a8a" />
            <path d="M635 471 646 469V482L635 484Z" fill="#f8f8fc" />
            <path d="M635 484Q652 480 653 485 656 525 652 566 645 572 635 568Z" fill="url(#tube)" />
            <path d="M647 480 655 475V596L648 580 654 550V500Z" fill="#868686" />
            <path d="M635 571 646 570V582L628 585 627 573Z" fill="#f8f8fc" />
            <path d="M636 585 651 597 685 593V607Q660 601 636 585Z" fill="#858585" />
            <!-- right exhaust -->
            <path d="M796 408 827 400V404L856 401V414L796 417Z" fill="#f8f8fc" />
            <path d="M831 416 866 411V500L831 505Z" fill="url(#tube)" />
            <path d="M844 416H864V430L849 432Z" fill="#a4a4a4" />
            <path d="M864 400 868 398V500L862 500 865 470V420Z" fill="#868686" />
            <path d="M800 421Q820 411 831 416V518L800 523Z" fill="url(#plate)" />
            <path d="M803 524 827 519V534L803 537Z" fill="#f8f8fc" />
            <path d="M831 505 868 497V514L831 518Z" fill="#f8f8fc" />
            <path d="M842 517 868 495H873V526L869 537H864Z" fill="#898989" />
            <!-- crankcase -->
            <path d="M652 432Q655 452 720 453 780 450 792 432V600Q765 611 730 610.500 705 611 688 604L684 460Z" fill="url(#body)" />
            <path d="M635 432 690 418 640 470Z" fill="#868686" />
            <path d="M652 430Q660 415 720 412 775 412 791 426 793 436 775 445 750 453 722 453 655 448 652 430Z" fill="#8a8a8a" />
            <path d="M652 432Q660 450 720 453 750 453 775 446" fill="none" stroke="#d8d8d8" stroke-width="2" />
            <path d="M651 463 689 458V471L651 477Z" fill="#f8f8fc" />
            <path d="M655 480 685 475V578L655 583Z" fill="url(#plate)" />
            <path d="M651 586 685 581V593L651 598Z" fill="#f8f8fc" />
            <path d="M679 416Q692 428 722 428 760 426 768 408V432Q755 443 722 443 690 441 679 433Z" fill="url(#shaft)" />
            <path d="M679 417Q692 428 722 428 760 426 768 409" fill="none" stroke="#e4e4e4" stroke-width="2" />
            <path d="M688 376H759V415Q745 422 722 422 700 422 688 416Z" fill="url(#shaft)" />
            <path d="M676 376 688 377V413L679 434 659 437Z" fill="#f8f8fc" />
            <path d="M673 377H677L662 437H658Z" fill="#a2a2a4" />
            <path d="M759 378 774 380 779 395V420H770L764 406 759 404Z" fill="#f8f8fc" />
            <path d="M732 377H737L744 447 736 444Z" fill="#8a8a8a" />
            <path d="M737 377H743L749 448H743Z" fill="#e8e8ec" />
            <path d="M791 425Q796 418 800 425V465H792Z" fill="#7e7e7e" />
            <path d="M685 479Q696 471 707 479V612Q696 618 685 614Z" fill="url(#post)" />
            <ellipse cx="696" cy="475.500" rx="11" ry="3" fill="#858585" />
            <path d="M780 464H803V602Q790 606 780 601Z" fill="url(#post)" />
            <ellipse cx="791.500" cy="463.500" rx="11.500" ry="3.500" fill="#858585" />

            <!-- cooling fins -->
            <path d="M481 545 521 582 627 568V606H610L600 608 546 600 533 603V613L503 617 500 612H491V608H483L480 560Z" fill="#f8f8fc" />
            <path d="M480 540 484 545V608H481ZM490 572H493V612H490ZM500 578H503V616H500ZM520 580H522V603H520Z" fill="#8c8c8c" />
            <path d="M533 602 544 600V578L552 575V612L545 620Z" fill="#8a8a8a" />
            <path v-for="f in finsLeft" :key="f[0]" :d="fin(f, 570)" fill="#8a8a8a" />
            <path d="M611 572 618 571V587L614 580Z" fill="#fff" />
            <path d="M868 494 964 484V515H948L940 518 881 524Z" fill="#f8f8fc" />
            <path v-for="f in finsRight" :key="f[0]" :d="fin(f, 486)" fill="#8a8a8a" />
            <path d="M866 494H872V528L866 538 860 534Z" fill="#8a8a8a" />
            <path d="M945 484 964 482V515L948 517Z" fill="#f8f8fc" />

            <!-- cowl -->
            <g clip-path="url(#cowl)">
              <path d="M450 200H775V385H635V590H450Z" fill="#72a8e4" />
              <path d="M673 200H1000V500H773V320Q774 302 757 284L735 230 673 213Z" fill="#72c7e7" />
              <path d="M450 310V590H521V345Z" fill="url(#side)" filter="url(#fine)" />
              <path d="M450 340V582H521V360Z" fill="url(#side)" />
              <path d="M452 276Q485 300 530 330" fill="none" stroke="#8ccaff" stroke-width="36" filter="url(#soft)" />
              <ellipse cx="512" cy="318" rx="46" ry="24" fill="url(#corner)" transform="rotate(25 512 318)" />
              <path d="M517 362Q518 318 550 309L628 298" fill="none" stroke="#9cd9ff" stroke-width="9" filter="url(#fine)" />
              <path d="M515 344Q520 318 546 308" fill="none" stroke="#f4ffff" stroke-width="3" filter="url(#fine)" />
              <path d="M521 585V352Q524 318 551 314L630 304V372L635 373V590Z" fill="#e0ffff" />
              <path d="M630 297Q634 296 641 305V371L631 373Z" fill="#86bcfc" />
              <path d="M631.500 306V373" stroke="#a4dcff" stroke-width="2" />

              <!-- duct wall -->
              <path d="M640 372V308Q644 294 660 297 720 311 773 303V382H636Z" fill="url(#wallL)" />
              <path d="M773 303Q840 296 884 264V385H773Z" fill="url(#wallR)" />
              <path d="M643 312Q645 298 662 299 712 309 740 309 760 308 772 305" fill="none" stroke="#fff" stroke-width="4" filter="url(#fine)" />
              <path d="M773 301Q830 294 862 277" fill="none" stroke="#88f0ff" stroke-width="7" filter="url(#soft)" />
              <path d="M852 280Q870 266 880 264V276Q870 270 852 284Z" fill="#4b91ab" filter="url(#fine)" opacity=".7" />
              <path d="M882 350V270Q886 262 900 261L950 253" fill="none" stroke="#90f0ff" stroke-width="8" filter="url(#fine)" />
              <path d="M885 345V272Q892 270 950 262 968 262 978 272 985 280 984 300V482L868 497V365H884Z" fill="#e0ffff" />
              <path d="M887 345V278" stroke="#fff" stroke-width="4" filter="url(#fine)" />
              <path d="M903 204Q950 226 974 253 955 250 945 250 930 224 903 204Z" fill="#3b7186" filter="url(#fine)" opacity=".55" />
              <path d="M984 290V479" stroke="#a0f0ff" stroke-width="4" />
              <path d="M986.500 285V480" stroke="#5aa9c6" />
              <path d="M761 332 785 330V385H761Z" fill="#e0ffff" />
              <path d="M761 378V332L784 330" fill="none" stroke="#68a6d8" />
              <path d="M754 292.500 775 289M765 291 776 290.500" stroke="#e0ffff" stroke-width="2" />
            </g>
            <path d="M835 371 868 362V399Z" fill="#72c7e7" />
            <path d="M466 551V525Q468 513 471 514 477 516 480 528V531H469V551Z" fill="#d8fcff" />
            <path d="M469 531H479V566L483 572 466 560V552H469Z" fill="#222830" />
            <path d="M479 528H483V570L480 566Z" fill="#9a8f8c" />

            <!-- intake and impeller -->
            <path d="M650 238Q672 227 705 226" fill="none" stroke="#e6fdff" stroke-width="4" filter="url(#fine)" />
            <path d="M690 227Q780 222 803 246" fill="none" stroke="#86d4f4" stroke-width="3" filter="url(#fine)" />
            <ellipse cx="721" cy="257.500" rx="88.500" ry="27.500" fill="#7acbf0" />
            <g clip-path="url(#hole)">
              <path d="M630 228H708V286H630Z" fill="#00e000" />
              <path d="M643 240V280M651 240V280M661 240V282M674 238V284M689 235V286" stroke="#7cf87c" />
              <path d="M656 240V280M669 240V280M693 238V286M705 236V286" stroke="#00a800" />
              <path d="M691 238V290" stroke="#92e5f0" stroke-width="2" />
              <path d="M713 236H717V266H713ZM719 236H724V264H719Z" fill="#00d400" />
              <path v-for="r in ribs" :key="r[0]" :d="`M${r[0]} 232H${r[1]}V290H${r[0]}Z`" fill="#00d800" />
              <path d="M738 236V286M775 236V284M789 240V280M798 242V276" stroke="#009c00" />
              <path d="M795 245H803V275L795 280Z" fill="#68ee68" />
              <path d="M632 258A89 27.500 0 0 1 810 257" fill="none" stroke="#00e600" stroke-width="8" />
              <path d="M640 252Q665 236 721 234.500 785 236 805 255" fill="none" stroke="#009a00" />
            </g>
            <path d="M712 267H731V285H712Z" fill="url(#post)" />
            <ellipse cx="721.500" cy="267" rx="9.500" ry="3.500" fill="#8a8a8a" />

            <!-- lugs and seal -->
            <path d="M642 350H664V375Q660 380 652 380 645 379 642 375Z" fill="url(#lug)" />
            <path d="M642 350Q648 344 656 345L670 348 664 353H650Z" fill="#72a8e4" />
            <path d="M852 337H882V360Q868 366 852 360Z" fill="url(#lug2)" />
            <path d="M852 337 868 330Q878 330 882 337 868 344 852 337Z" fill="#72c0e0" />
            <circle cx="653" cy="350" r="1.500" fill="#dff" />
            <circle cx="869" cy="336" r="1.500" fill="#dff" />
            <path d="M636 380 641 375 648 378Q657 380 663 377L672 372Q700 377 740 378.500 770 379 800 373 835 367 852 361L860 364 875 364 882 361" fill="none" stroke="url(#seal)" stroke-width="4.500" />

            <!-- UCS icon -->
            <path d="M301 247 318 263" stroke="#2f8aff" stroke-width="5" stroke-linecap="round" />
            <path d="M319 219V263" stroke="#36b536" stroke-width="5" stroke-linecap="round" />
            <path d="M320.500 219V264" stroke="#8ff08f" stroke-width="2" />
            <path d="M275 269 319 264" stroke="#f25050" stroke-width="5" stroke-linecap="round" />
            <path d="M275 268.500 319 263.500" stroke="#ffa0a0" stroke-width="2" />
            <path d="m317 203 6 5.500 6-5.500M323 208.500V215" fill="none" stroke="#1ea81e" />
            <path d="m269 254 12 12M281 254 269 266" stroke="#f02828" />
            <path d="M298 232.500H310L299 244.500H310" fill="none" stroke="#1468f0" />

            <!-- crosshair -->
            <path d="M161 600 204 595M211 594 231 591" stroke="#e06a6a" />
            <path d="M190 578 204 591M211 597 217 602" stroke="#5a5ad8" />
            <path d="M207.500 547V590M207.500 597V617M204.500 590.500H210.500V596.500H204.500Z" fill="none" stroke="#e8e8e8" />
          </svg>

          <div class="vp-label">[−][Custom View][Shaded]</div>
          <div class="vp-btns">
            <button aria-label="Minimize viewport"><svg width="12" height="12" viewBox="0 0 12 12"><path d="M1 9h10" stroke="#fff" stroke-width="3" /></svg></button>
            <button aria-label="Restore viewport"><svg width="12" height="12" viewBox="0 0 12 12"><path d="M4 3V1.500h7V8H9" fill="none" stroke="#fff" /><path d="M2 4.500h6V10H2z" fill="none" stroke="#fff" stroke-width="2" /></svg></button>
            <button aria-label="Close viewport"><svg width="12" height="12" viewBox="0 0 12 12"><path d="m2 2 7 8M9 2 2 10" stroke="#fff" stroke-width="2.500" /></svg></button>
          </div>
          <div class="cube">
            <svg width="104" height="110" viewBox="1256 209 104 110">
              <ellipse cx="1306" cy="265" rx="41" ry="42" fill="none" stroke="#434a52" stroke-width="9" />
              <path d="m1280 242 31-3 12 9-32 3z" fill="#a4a6a8" />
              <path d="m1280 242 11 9 1 34-10-9z" fill="#8a8c8f" />
              <path d="m1291 251 32-3v32l-31 5z" fill="#a0a1a3" />
              <path d="m1280 242 31-3 12 9-32 3zM1291 251l1 34M1323 248v32l-31 5-10-9-2-34" fill="none" stroke="#33383e" stroke-dasharray="6 2" />
              <path d="M1291.500 252h6v5h-6z" fill="#8b8e98" />
              <path d="m1294 245 14-2M1285 252v20" stroke="#44484e" stroke-width="2" stroke-dasharray="3 1" />
              <text x="1307" y="270" text-anchor="middle" font-size="7" font-weight="700" fill="#3a3e44" transform="rotate(-3 1307 268)">BOTTOM</text>
              <g font-size="16" font-weight="700" fill="#b9bbbd" text-anchor="middle">
                <text x="1309" y="227">N</text>
                <text x="1308" y="313" transform="rotate(180 1308 308)">S</text>
                <text x="1263" y="279" transform="rotate(176 1263 274)">E</text>
                <text x="1348" y="267" transform="rotate(12 1348 262)">W</text>
              </g>
            </svg>
            <button class="wcs">WCS <svg width="9" height="6" viewBox="0 0 9 6"><path d="M1 1h7L4.500 5z" fill="none" stroke="#c9cbd3" /></svg></button>
          </div>
          <div class="navbar">
            <svg width="32" height="212" viewBox="0 0 32 212" fill="none" stroke="#43474b" stroke-width="1.300">
              <circle cx="26" cy="5" r="3.500" /><path d="m24.500 3.500 3 3m0-3-3 3" />
              <path d="M16 19h11v11a11 11 0 1 1-11-11z" /><circle cx="16" cy="30" r="5.500" /><path d="m10 35 2-2M22 35l-2-2" />
              <path d="M14.500 49.500h4l-2 2z" fill="#43474b" />
              <path d="M3 56.500h26M3 164.500h26" stroke="#666a6d" />
              <path d="M12 83q-2-6-7-10 3-2 7 2L8 64q3-1 5 4V62q3-1 4 0l1 7 2-7q3 0 3 2l-1 8 3-5q3 1 1 5-2 8-4 11z" />
              <path d="m5 90 12 12M17 90 5 103M5 95v-5h5M13 90h5v5M5 98v6h5" /><circle cx="20.500" cy="103.500" r="5" /><path d="m24 107 3 3" stroke-width="3" />
              <path d="M14.500 119.500h4l-2 2z" fill="#43474b" />
              <path d="M13 148v-14h-2l4.500-6 4.500 6h-2v14z" /><path d="M11 136q-8 1-6 5 3 4 14 3 9-1 8-5 0-3-6-3M12 141l-4 3 4 3" />
              <path d="M14.500 157.500h4l-2 2z" fill="#43474b" />
              <path d="M5 170h5v5H5zM13 170h5v5h-5zM21 170h5v5h-5zM4.500 179.500h16v12h-16z" /><path d="m10 182 6 3.500-6 3.500z" fill="#43474b" />
              <circle cx="26" cy="206" r="3.500" /><path d="M24 206h4" />
            </svg>
          </div>
          <div class="cmd">
            <i class="cmd-grip"></i>
            <button class="cmd-x" aria-label="Close command line"><svg width="10" height="10" viewBox="0 0 10 10"><path d="m1 1 8 8M9 1 1 9" stroke="#444" stroke-width="2" /></svg></button>
            <button class="cmd-tool" aria-label="Customize"><svg width="16" height="16" viewBox="0 0 16 16"><path d="m2 12 7-6q-1-4 3-5l1 .500L11 4l1 1.500 2.500-1.500q1 4-3.500 5l-7 6q-3 0-2-3z" fill="none" stroke="#555" /></svg></button>
            <label class="cmd-line">
              <svg width="26" height="14" viewBox="0 0 26 14"><path d="M.5 1.500h15v11H.5z" fill="none" stroke="#444" /><path d="M0 2.500h16" stroke="#444" stroke-width="3" /><path d="m3 6 2 1.500L3 9M6 10h4" fill="none" stroke="#444" /><path d="M18 5h8l-4 4z" fill="#444" /></svg>
              <input v-model="command" type="text" placeholder="Type a command" aria-label="Command" />
              <i class="caret up"></i>
            </label>
          </div>
        </div>
      </main>

      <div class="layouts">
        <a href="#" class="active">Model</a>
        <a href="#">Layout2</a>
        <a href="#">Layout1</a>
        <button aria-label="New layout"><svg width="8" height="8" viewBox="0 0 8 8"><path d="M4 0v8M0 4h8" stroke="#777" stroke-width="2" /></svg></button>
      </div>

      <div class="status">
        <div class="grp"><button class="txt model">MODEL</button></div>
        <div class="grp g3">
          <button class="st" aria-label="Grid"><svg viewBox="0 0 20 20" v-html="icons.grid"></svg></button>
          <button class="st" aria-label="Snap"><svg viewBox="0 0 20 20" v-html="icons.snap"></svg></button>
          <i class="caret wide"></i>
        </div>
        <div class="grp g2">
          <button class="st" aria-label="Ortho"><svg viewBox="0 0 20 20" v-html="icons.ortho"></svg></button>
          <button class="st" aria-label="Polar"><svg viewBox="0 0 20 20" v-html="icons.polar"></svg></button>
          <i class="caret wide"></i>
          <button class="st" aria-label="Isodraft"><svg viewBox="0 0 20 20" v-html="icons.iso"></svg></button>
          <i class="caret wide"></i>
          <button class="st on" aria-label="Tracking"><svg viewBox="0 0 20 20" v-html="icons.otrack"></svg></button>
          <button class="st on gap" aria-label="Object snap"><svg viewBox="0 0 20 20" v-html="icons.osnap"></svg></button>
          <i class="caret wide mid"></i>
          <button class="st on" aria-label="3D snap"><svg viewBox="0 0 20 20" v-html="icons.osnap3d"></svg></button>
          <i class="caret wide mid"></i>
          <button class="st on gap" aria-label="Dynamic UCS"><svg viewBox="0 0 20 20" v-html="icons.dynUcs"></svg></button>
        </div>
        <div class="grp g4">
          <button class="st" aria-label="Annotation visibility"><svg viewBox="0 0 20 20" v-html="icons.anno1"></svg></button>
          <button class="st" aria-label="Auto scale"><svg viewBox="0 0 20 20" v-html="icons.anno2"></svg></button>
          <button class="st" aria-label="Annotation scale"><svg viewBox="0 0 20 20" v-html="icons.anno3"></svg></button>
          <button class="txt scale">1:1</button>
          <i class="caret wide"></i>
        </div>
        <div class="grp g2">
          <button class="st" aria-label="Workspace"><svg viewBox="0 0 20 20" v-html="icons.gear"></svg></button>
          <button class="txt ws">3D Modeling</button>
          <i class="caret wide"></i>
        </div>
        <div class="grp g2"><button class="st on" aria-label="Monitor"><svg viewBox="0 0 20 20" v-html="icons.plus"></svg></button></div>
        <div class="grp g4"><button class="st" aria-label="Isolate"><svg viewBox="0 0 20 20" v-html="icons.shapes"></svg></button></div>
        <div class="grp g4"><button class="st on" aria-label="Performance"><svg viewBox="0 0 20 20" v-html="icons.isolate"></svg></button></div>
        <div class="grp g4 trio">
          <button class="st" aria-label="Units"><svg viewBox="0 0 20 20" v-html="icons.units"></svg></button>
          <button class="st" aria-label="Hardware"><svg viewBox="0 0 20 20" v-html="icons.hardware"></svg></button>
          <button class="st" aria-label="Graphics"><svg viewBox="0 0 20 20" v-html="icons.monitor"></svg></button>
        </div>
        <div class="grp g3">
          <button class="st" aria-label="Clean screen"><svg viewBox="0 0 20 20" v-html="icons.clean"></svg></button>
          <button class="st" aria-label="Customization"><svg viewBox="0 0 20 20" v-html="icons.menu"></svg></button>
        </div>
      </div>
    </div>

    <!-- Windows taskbar -->
    <footer class="taskbar">
      <button class="win" aria-label="Start"><svg width="16" height="16" viewBox="0 0 16 16"><path d="m0 2.500 6.500-1v6H0zM7.500 1.300 16 0v7.500H7.500zM0 8.500h6.500v6L0 13.500zM7.500 8.500H16V16l-8.500-1.300z" fill="#111" /></svg></button>
      <label class="win-search">
        <svg width="18" height="18" viewBox="0 0 18 18"><circle cx="11" cy="6.500" r="5" fill="none" stroke="#222" stroke-width="1.300" /><path d="m7.500 10.500-6 6" stroke="#222" stroke-width="1.300" /></svg>
        <input v-model="taskSearch" type="text" placeholder="Typ hier om te zoeken" aria-label="Typ hier om te zoeken" />
      </label>
      <button class="task" aria-label="Task view"><svg width="18" height="18" viewBox="0 0 18 18"><path d="M1.500 1v3h10V1M1.500 17v-3h10v3M1.500 6.500h10v5h-10zM15.500 1v3M15.500 10v7" fill="none" stroke="#111" stroke-width="1.200" /><path d="M14 5.500h3v3h-3z" fill="#111" /></svg></button>
      <button class="task" aria-label="Explorer"><svg width="22" height="20" viewBox="0 0 22 20"><path d="M1 1h8l2 2h10v15H1z" fill="#fbc944" /><path d="M1 1h8l1 2H1z" fill="#dd9a10" /><path d="M1 5h20v6H1z" fill="#ffdc73" /><path d="M4 10h14v9h-4v-4H8v4H4z" fill="#3c95d8" /></svg></button>
      <button class="task" aria-label="Player"><svg width="24" height="24" viewBox="0 0 24 24"><defs><linearGradient id="play" x2="1" y2="1"><stop offset=".6" stop-color="#089a0a" /><stop offset=".85" stop-color="#75b7e0" /></linearGradient></defs><circle cx="12" cy="12" r="11.500" fill="url(#play)" /><path d="m9.500 8 6.500 4-6.500 4z" fill="none" stroke="#fff" stroke-width="1.500" /></svg></button>
      <button class="task run" aria-label="Edge"><svg width="26" height="24" viewBox="0 0 26 24"><defs><linearGradient id="edge"><stop offset="0" stop-color="#1595dc" /><stop offset=".6" stop-color="#32c3dc" /><stop offset="1" stop-color="#68dc5c" /></linearGradient></defs><circle cx="13" cy="12" r="11.500" fill="#0c6fc4" /><path d="M2 9Q5 0 14 .5 24 2 24.500 11q-1 5-7 5-5 0-3-3 3-4-2-6Q7 5 2 9z" fill="url(#edge)" /><path d="M9 9q-5 6 0 11 5 4 12 0-7 1-9-4-1-4 1-6z" fill="#1052a0" /><path d="M13 15q2 4 8 3l3-2-1 3q-8 0-10-4z" fill="#e7d8cf" /></svg></button>
      <button class="task run" aria-label="Mail"><svg width="26" height="24" viewBox="0 0 26 24"><path d="M1 8 13 1l12 7v15H1z" fill="#0b5cab" /><path d="M4 8h18v9H4z" fill="#fff" /><path d="m1 9 12 9 12-9v14H1z" fill="#2aa5ea" /><path d="m1 23 12-9 12 9z" fill="#1784d8" /></svg></button>
      <button class="task run current" aria-label="AutoCAD"><svg width="22" height="22" viewBox="0 0 22 22"><path d="M0 0h22v22H0z" fill="#fae5e0" /><path d="M3 20 9 2h4l6 18h-4l-1-4-5 1-2 3z" fill="#b5202a" /><path d="m9 2 1.500 0L6 20H3zM9 12l4-1v3l-5 2z" fill="#7d1118" /></svg></button>
      <div class="tray">
        <svg width="12" height="20" viewBox="0 0 12 20"><path d="m1 13 5-6 5 6" fill="none" stroke="#222" stroke-width="1.300" /></svg>
        <svg width="18" height="20" viewBox="0 0 18 20"><path d="M5.500 5.500h11v9h-11z" fill="none" stroke="#111" /><path d="M7 7h8v6H7z" fill="#111" /><path d="M1 6h5v4H1zM2 3v3M5 3v3M3.500 10v5h3" fill="#111" stroke="#111" /></svg>
        <svg width="16" height="20" viewBox="0 0 16 20"><g fill="none" stroke="#555"><path d="M2 15Q4 6 14 5M5 16q2-7 9-8M8 16q1-4 6-5" /></g><path d="M10 17q1-3 4-3v3z" fill="#222" /></svg>
        <svg width="18" height="20" viewBox="0 0 18 20"><path d="M1.500 8h3l4-4v12l-4-4h-3zM10.500 8q2 2 0 4" fill="none" stroke="#222" /><path d="M12.500 6q3 4 0 8M14.500 4q4 6 0 12" fill="none" stroke="#888" /></svg>
        <span class="lang">NLD</span>
        <div class="clock"><span>20:08</span><span>4-4-2021</span></div>
        <button class="note" aria-label="Notifications">
          <svg width="26" height="26" viewBox="0 0 26 26"><path d="M1 3h16v12H9l-4 4v-4H1z" fill="#111" /><path d="M4 6.500h10M4 9.500h10M4 12h6" stroke="#fff" /><circle cx="16" cy="17" r="7.500" fill="#d8d2cf" stroke="#777" /></svg>
          <b>1</b>
        </button>
      </div>
    </footer>
  </div>
</template>

<style>
body {
  margin: 0;
  background: #e6e6e6;
}
</style>

<style scoped>
.desktop {
  display: flex;
  flex-direction: column;
  min-height: 100vh;
  font-family: "Open Sans", "Noto Sans", sans-serif;
  font-size: 12px;
  line-height: 16px;
  color: #333;
  background: linear-gradient(90deg, transparent 563px, #cf8a35 563px, #cf8a35 611px, transparent 611px) top / 100% 1px no-repeat, linear-gradient(#e8e8e8 71px, #00509e 71px, #00509e 135px, #fff 135px) left / 2px 100% no-repeat, #e8e8e8;
}
button {
  border: 0;
  padding: 0;
  margin: 0;
  background: none;
  font: inherit;
  color: inherit;
}
a {
  color: inherit;
  text-decoration: none;
}
svg {
  display: block;
  flex: none;
}
input,
select {
  font: inherit;
  color: inherit;
  border: 0;
  outline: 0;
  padding: 0;
  min-width: 0;
}

.window {
  flex: 1;
  display: flex;
  flex-direction: column;
  margin: 2px 2px 0;
  padding: 0 4px 4px;
  background: #f5f5f5;
}

/* carets */
.caret {
  display: flex;
  justify-content: center;
  align-items: center;
}
.caret::after {
  content: "";
  border: 3px solid transparent;
  border-top-color: #666;
  border-bottom: 0;
}
.caret.wide::after {
  border-width: 4px 4px 0;
}
.caret.right::after {
  border: 4px solid transparent;
  border-left-color: #555;
  border-right: 0;
}
.caret.up::after {
  border: 4px solid transparent;
  border-bottom-color: #444;
  border-top: 0;
}
.caret.faint {
  opacity: 0.6;
}
.ico {
  display: flex;
  align-items: center;
  justify-content: center;
}
.ico svg,
.st svg,
.combo svg {
  width: 20px;
  height: 20px;
}

/* header */
.head {
  display: flex;
  background: #d9d9d9;
  margin: 0 -4px;
  padding-left: 4px;
}
.app-btn {
  width: 41px;
  height: 41px;
  margin-top: 4px;
  border: 1px solid #000;
  background: linear-gradient(#d0d0d0, #707070);
  overflow: hidden;
}
.head-rows {
  flex: 1;
  min-width: 0;
}
.title-row {
  height: 30px;
  display: flex;
  align-items: center;
}
.quick {
  display: flex;
  align-items: center;
  width: 312px;
  padding-left: 5px;
}
.quick .ico {
  width: 24px;
  height: 22px;
}
.quick .caret {
  width: 12px;
}
.quick .sheet {
  box-sizing: border-box;
  border: 1px solid #1a86dc;
  background: #c8ddeb;
}
.quick .caret.wide {
  width: 18px;
}
.doc-title {
  display: flex;
  gap: 8px;
  white-space: nowrap;
  flex: 1;
}
.info {
  display: flex;
  align-items: center;
  border-bottom: 1px solid #bbb;
  height: 26px;
}
.info .caret {
  width: 12px;
}
.info .caret.user-caret {
  width: 19px;
  padding-right: 3px;
  justify-content: flex-end;
}
.keyword {
  width: 174px;
  height: 19px;
  border: 1px solid #aaa;
  background: #fff;
  padding: 0 2px;
  font-style: italic;
}
.info .ico {
  width: 25px;
}
.user {
  display: flex;
  align-items: center;
  gap: 5px;
}
.bar {
  width: 1px;
  height: 18px;
  background: #f5f5f5;
  margin: 0 5px;
}
.help span {
  width: 13px;
  height: 13px;
  border: 1px solid #333;
  border-radius: 50%;
  background: #fff;
  color: #2457c4;
  font-weight: 700;
  line-height: 13px;
  outline: 1px solid #ccc;
}
.win-btns {
  display: flex;
  gap: 11px;
  padding: 0 9px 0 64px;
}
.tabs {
  display: flex;
  height: 19px;
  padding-left: 5px;
}
.tabs a {
  padding: 0 9px;
  line-height: 17px;
  white-space: nowrap;
}
.tabs .active {
  background: #f5f5f5;
  border-radius: 2px 2px 0 0;
}
.min-ribbon {
  margin-left: 12px;
}
.tabs .caret {
  width: 14px;
}

/* ribbon */
.ribbon {
  display: flex;
  box-sizing: border-box;
  height: 97px;
  background: #f5f5f5;
  border-bottom: 1px solid #d0d0d0;
  padding-left: 2px;
}
.panel {
  flex: none;
  box-sizing: border-box;
  display: flex;
  flex-direction: column;
  border-right: 1px solid #d6d6d6;
}
.body {
  display: flex;
  height: 76px;
  box-sizing: border-box;
  padding-top: 4px;
}
.panel footer {
  flex: 1;
  display: flex;
  align-items: center;
  justify-content: center;
  gap: 6px;
  position: relative;
}
.launch {
  position: absolute;
  right: 5px;
}
.big {
  display: flex;
  flex-direction: column;
  align-items: center;
  width: 46px;
  line-height: 15px;
}
.big svg {
  width: 36px;
  height: 36px;
  margin-bottom: 2px;
}
.big .caret {
  height: 7px;
}
.stack {
  display: flex;
  flex-direction: column;
  flex: 1;
}
.stack .ico {
  height: 24px;
}
.cells {
  display: grid;
  grid-auto-rows: 24px;
}
.modeling {
  width: 134px;
}
.modeling .ext {
  width: 58px;
}
.mesh {
  width: 78px;
}
.mesh .big {
  width: 52px;
}
.solid {
  width: 95px;
}
.solid .cells {
  grid-template-columns: 30px 26px 24px 10px;
}
.draw {
  width: 94px;
}
.draw .cells {
  grid-template-columns: 30px 22px 28px 10px;
}
.modify {
  width: 145px;
}
.modify .cells {
  grid-template-columns: 28px 28px 22px 30px 22px 10px;
}
.sect {
  width: 78px;
}
.sect .big {
  width: 77px;
}
.sect footer {
  justify-content: flex-start;
  padding-left: 5px;
}
.coords {
  width: 145px;
}
.coords .cells {
  grid-template-columns: 28px 8px 34px 22px 26px 24px;
}
.combo {
  display: flex;
  align-items: center;
  box-sizing: border-box;
  height: 22px;
  margin: 1px 2px;
  padding: 0 3px 0 1px;
  border: 1px solid #d6d6d6;
  background: #fff;
}
.combo select {
  flex: 1;
  appearance: none;
  background: none;
  padding-left: 1px;
}
.combo.ucs {
  grid-column: 3 / 7;
  margin: 1px 0 1px 5px;
  padding-right: 2px;
}
.viewp {
  width: 127px;
}
.view-body {
  flex-direction: column;
}
.vp-row {
  display: flex;
  align-items: center;
  height: 24px;
  padding-left: 4px;
  gap: 2px;
}
.selection {
  width: 173px;
}
.selection .body {
  padding-left: 2px;
}
.selection .on {
  box-sizing: border-box;
  width: 44px;
  height: 72px;
  border: 1px solid #1a86dc;
  background: #d4e8f8;
}
.selection .on svg {
  margin-top: -1px;
}
.selection .nofilter {
  width: 70px;
}
.selection .nofilter + .big {
  width: 50px;
}
.gizmo-caret {
  align-self: flex-end;
  height: 36px;
}
.side-panel {
  width: 58px;
  margin: 1px 3px 1px 0;
  background: #fff;
  display: flex;
  flex-direction: column;
  align-items: center;
  outline: 1px solid #d9d9d9;
}
.side-panel svg {
  width: 36px;
  height: 36px;
  margin-top: 2px;
}
.side-panel span {
  margin: 1px 0 auto;
}
.side-panel .caret {
  height: 12px;
}

/* file tabs */
.files {
  display: flex;
  height: 27px;
  align-items: flex-end;
  background: #d9d9d9;
  border-bottom: 4px solid #f5f5f5;
  padding-left: 22px;
}
.file {
  position: relative;
  display: flex;
  align-items: center;
  justify-content: space-between;
  box-sizing: border-box;
  height: 22px;
  padding: 0 18px 0 10px;
  color: #777;
  white-space: nowrap;
  z-index: 0;
}
.file::before,
.file::after {
  content: "";
  position: absolute;
  inset: 0 40% 0 3px;
  background: #e8e8e8;
  border-radius: 8px 0 0 0;
  transform: skewX(-14deg);
  z-index: -1;
}
.file::after {
  inset: 0 3px 0 40%;
  border-radius: 0 8px 0 0;
  transform: skewX(14deg);
}
.file.start {
  width: 122px;
}
.file.current {
  width: 154px;
  color: #222;
  padding: 0 8px 0 9px;
}
.file.other {
  width: 126px;
  padding-right: 16px;
}
.file.current::before,
.file.current::after {
  background: #f5f5f5;
}
.file.add {
  width: 24px;
  height: 20px;
  margin-left: 3px;
  padding: 0;
  justify-content: center;
}

/* work area */
.work {
  flex: 1;
  display: flex;
}
.palettes {
  width: 25px;
  display: flex;
  flex-direction: column;
  gap: 5px;
  padding: 5px 3px 5px 1px;
  box-sizing: border-box;
}
.palette {
  flex: 1;
  position: relative;
  display: flex;
  align-items: center;
  justify-content: center;
  border: 1px solid #b4b4b4;
}
.palette span {
  writing-mode: vertical-rl;
  transform: rotate(180deg);
  line-height: 16px;
}
.grip {
  position: absolute;
  top: 2px;
  width: 9px;
  height: 3px;
  background: linear-gradient(transparent 1px, #f5f5f5 1px, #f5f5f5 2px, transparent 2px), repeating-linear-gradient(90deg, #555 0 1px, transparent 1px 2px);
}
.canvas {
  flex: 1;
  position: relative;
  background: #222830;
  overflow: hidden;
}
.scene {
  position: absolute;
  inset: 0;
  width: 100%;
  height: 100%;
}
.vp-label {
  position: absolute;
  left: 4px;
  top: 6px;
  color: #f0f0f0;
}
.vp-btns {
  position: absolute;
  right: 10px;
  top: 9px;
  display: flex;
  gap: 8px;
}
.cube {
  position: absolute;
  right: 0;
  top: 30px;
  display: flex;
  flex-direction: column;
  align-items: center;
  font-family: "Liberation Sans", sans-serif;
}
.wcs {
  display: flex;
  align-items: center;
  justify-content: space-between;
  width: 48px;
  height: 17px;
  box-sizing: border-box;
  padding: 0 5px 0 4px;
  margin: 3px 14px 0 0;
  border-radius: 4px;
  background: #9296a2;
  color: #3f444c;
  font-size: 11px;
}
.navbar {
  position: absolute;
  right: 4px;
  top: 186px;
  border-radius: 4px;
  background: #595d60;
  outline: 1px solid #16191d;
}
.cmd {
  position: absolute;
  left: 20%;
  right: 20%;
  bottom: 0;
  height: 27px;
  display: flex;
  align-items: center;
  background: #a2a3a5;
  border-radius: 3px 3px 0 0;
}
.cmd-grip {
  width: 6px;
  height: 18px;
  margin: 0 5px 0 3px;
  background: radial-gradient(#333 1px, transparent 1px) 0 0 / 3px 3px;
}
.cmd-tool {
  margin: 0 6px 0 10px;
}
.cmd-line {
  flex: 1;
  display: flex;
  align-items: center;
  gap: 7px;
  height: 25px;
  padding: 0 4px;
  background: #bcbdbf;
  border-radius: 3px;
}
.cmd-line input {
  flex: 1;
  background: none;
  font: italic 12px/16px "DejaVu Sans Mono", monospace;
}
.cmd-line input::placeholder {
  color: #555;
  opacity: 1;
}
.keyword::placeholder {
  color: #666;
  opacity: 1;
}

/* layout tabs and status bar */
.layouts {
  display: flex;
  height: 21px;
  align-items: flex-start;
  background: #d9d9d9;
  padding-left: 12px;
}
.layouts a {
  height: 18px;
  line-height: 18px;
  padding: 0 8px;
  margin: 0 2px;
  background: #e6e6e6;
  color: #777;
  border-radius: 0 0 7px 7px;
}
.layouts .active {
  background: #f5f5f5;
  color: #222;
  font-weight: 700;
  padding: 0 9px;
}
.layouts button {
  width: 22px;
  height: 16px;
  background: #e6e6e6;
  border-radius: 0 0 7px 7px;
  margin-left: 4px;
  display: grid;
  place-items: center;
}
.status {
  display: flex;
  justify-content: flex-end;
  align-items: flex-start;
  background: #d9d9d9;
  height: 26px;
  padding: 1px 1px 0 0;
}
.grp {
  display: flex;
  align-items: center;
  height: 24px;
  background: #f4f4f4;
}
.g2 {
  margin-left: 2px;
}
.g3 {
  margin-left: 3px;
}
.g4 {
  margin-left: 4px;
}
.grp .caret {
  width: 16px;
}
.grp .caret.mid {
  width: 18px;
}
.st {
  width: 24px;
  height: 22px;
  display: flex;
  align-items: center;
  justify-content: center;
}
.st.on {
  box-sizing: border-box;
  width: 22px;
  border: 1px solid #4a7aa8;
  background: #cde6ff;
}
.gap {
  margin-left: 2px;
}
.trio {
  padding: 0 1px;
}
.trio .st {
  width: 25px;
}
.txt.model {
  width: 47px;
}
.txt.scale {
  width: 18px;
}
.txt.ws {
  width: 75px;
  white-space: nowrap;
  text-align: right;
}

/* taskbar */
.taskbar {
  display: flex;
  align-items: stretch;
  height: 40px;
  background: linear-gradient(90deg, #e6d5cd, #e8dace 50%, #e2d3cf 75%, #dcd5cf);
}
.win {
  width: 48px;
  display: grid;
  place-items: center;
}
.win-search {
  box-sizing: border-box;
  width: 344px;
  display: flex;
  align-items: center;
  gap: 10px;
  padding-left: 11px;
  border: 1px solid #ccc;
  background: #fff;
}
.win-search input {
  flex: 1;
  font-size: 14px;
}
.win-search input::placeholder {
  color: #333;
  opacity: 1;
}
.task {
  width: 45px;
  margin: 0 2px;
  display: grid;
  place-items: center;
  border-bottom: 2px solid transparent;
}
.task.run {
  width: 41px;
  margin: 0 4px;
  border-bottom-color: #cf8a2b;
}
.task.current {
  width: 45px;
  margin: 0 2px;
  background: #f5efeb;
}
.tray {
  margin-left: auto;
  display: flex;
  align-items: center;
  gap: 8px;
  padding-right: 15px;
}
.clock {
  display: flex;
  flex-direction: column;
  align-items: center;
  width: 60px;
  line-height: 18px;
}
.note {
  position: relative;
  margin-left: 5px;
}
.note b {
  position: absolute;
  left: 13px;
  top: 9px;
  font-weight: 400;
}
</style>
